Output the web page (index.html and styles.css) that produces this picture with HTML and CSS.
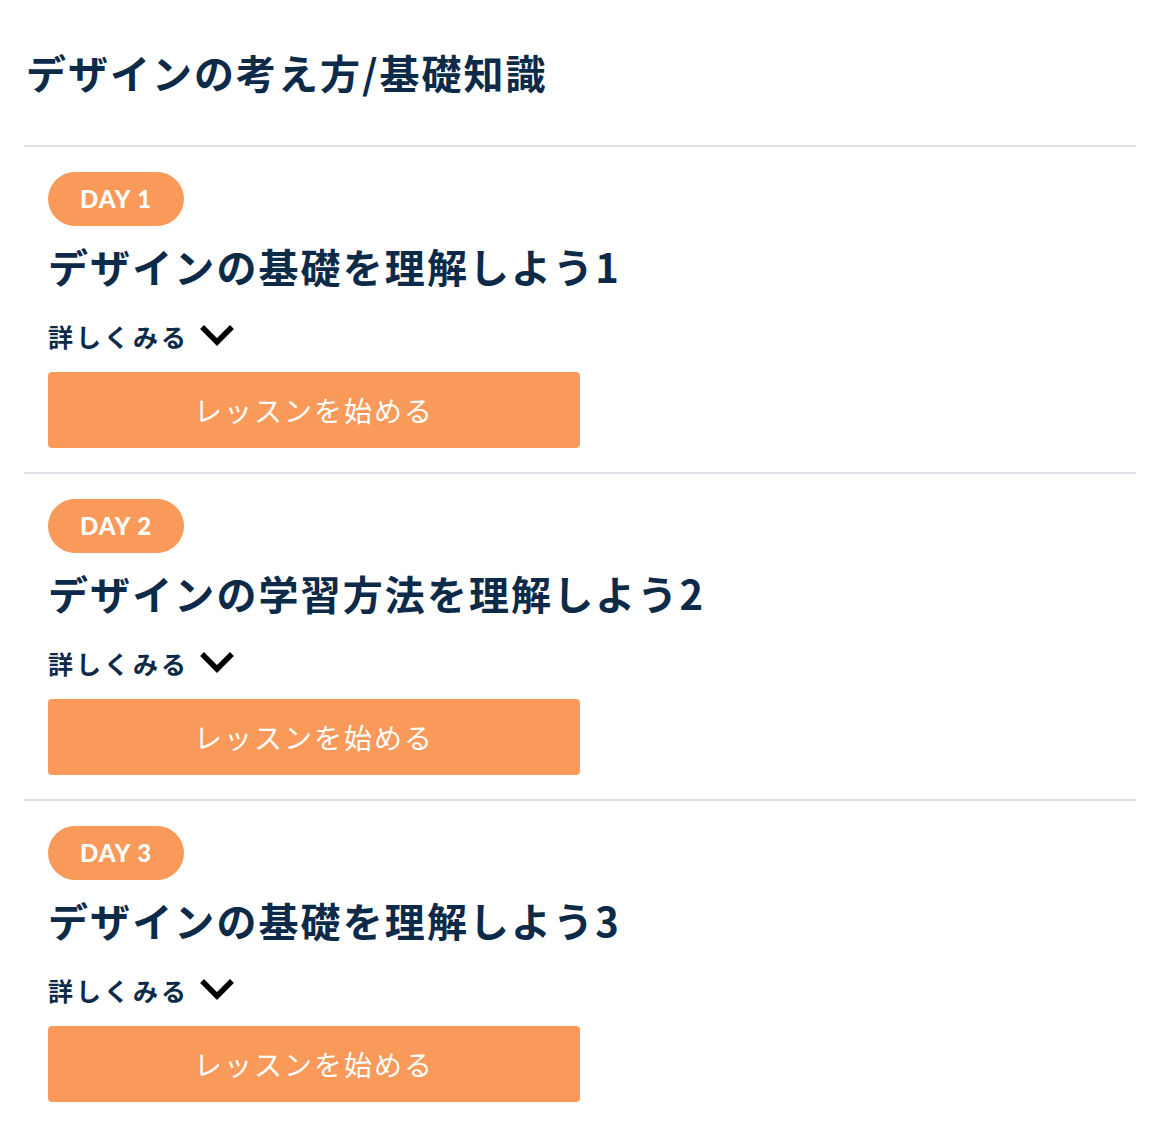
FILE: index.html
```html
<!DOCTYPE html>
<html lang="ja">
<head>
  <meta charset="UTF-8">
  <title>デザインの考え方/基礎知識</title>
  <link rel="stylesheet" href="styles.css">
</head>
<body>
<div class="course">
  <h1 class="course-title">デザインの考え方/基礎知識</h1>

  <div class="lesson">
    <span class="day">DAY 1</span>
    <h2 class="lesson-title">デザインの基礎を理解しよう1</h2>
    <p class="more">詳しくみる
      <svg class="chevron" width="36" height="26" viewBox="0 0 36 26">
        <path d="M4 6 L17 19 L30 6" fill="none" stroke="#000" stroke-width="5.5" stroke-linecap="square"/>
      </svg>
    </p>
    <a class="start" href="#">レッスンを始める</a>
  </div>

  <div class="lesson">
    <span class="day">DAY 2</span>
    <h2 class="lesson-title">デザインの学習方法を理解しよう2</h2>
    <p class="more">詳しくみる
      <svg class="chevron" width="36" height="26" viewBox="0 0 36 26">
        <path d="M4 6 L17 19 L30 6" fill="none" stroke="#000" stroke-width="5.5" stroke-linecap="square"/>
      </svg>
    </p>
    <a class="start" href="#">レッスンを始める</a>
  </div>

  <div class="lesson">
    <span class="day">DAY 3</span>
    <h2 class="lesson-title">デザインの基礎を理解しよう3</h2>
    <p class="more">詳しくみる
      <svg class="chevron" width="36" height="26" viewBox="0 0 36 26">
        <path d="M4 6 L17 19 L30 6" fill="none" stroke="#000" stroke-width="5.5" stroke-linecap="square"/>
      </svg>
    </p>
    <a class="start" href="#">レッスンを始める</a>
  </div>
</div>
</body>
</html>
```

FILE: styles.css
```css
* {
  margin: 0;
  padding: 0;
  box-sizing: border-box;
}

body {
  background: #fff;
  font-family: "Noto Sans CJK JP", "Noto Sans", sans-serif;
  color: #0d2b48;
}

.course {
  padding: 44px 28px 0 24px;
}

.course-title {
  font-size: 40px;
  line-height: 56px;
  font-weight: 700;
  letter-spacing: 2px;
  padding-left: 2px;
  margin-bottom: 45px;
}

.lesson {
  border-top: 2px solid #dde1e5;
  padding: 25px 24px 24px;
}

.day {
  display: inline-block;
  height: 54px;
  line-height: 54px;
  padding: 0 32px;
  border-radius: 27px;
  background: #f99a5a;
  color: #fff;
  font-family: "Lato", sans-serif;
  font-weight: 900;
  font-size: 24px;
  letter-spacing: 1px;
  vertical-align: top;
}

.lesson-title {
  margin-top: 12px;
  font-size: 40px;
  line-height: 56px;
  font-weight: 700;
  letter-spacing: 2.1px;
}

.more {
  display: flex;
  align-items: center;
  margin-top: 26px;
  font-size: 25px;
  line-height: 32px;
  font-weight: 700;
  letter-spacing: 3px;
}

.chevron {
  margin-left: 11px;
}

.start {
  display: block;
  width: 532px;
  height: 76px;
  margin-top: 20px;
  border-radius: 4px;
  background: #f99a5a;
  color: #fff;
  text-decoration: none;
  text-align: center;
  font-size: 28px;
  line-height: 76px;
  letter-spacing: 2px;
}
```
